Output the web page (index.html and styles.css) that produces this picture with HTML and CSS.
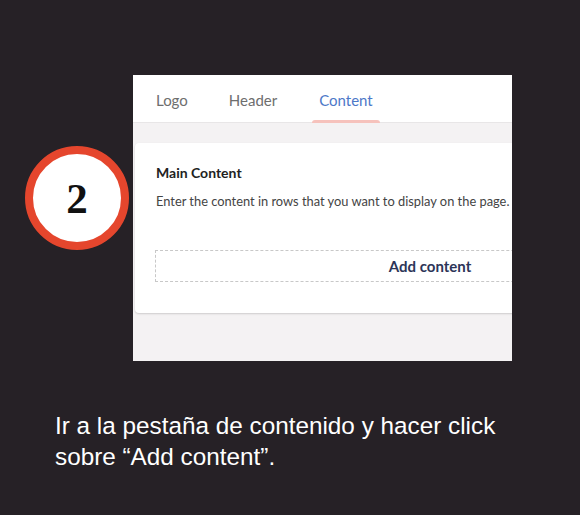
FILE: index.html
```html
<!DOCTYPE html>
<html>
<head>
<meta charset="utf-8">
<link rel="stylesheet" href="styles.css">
</head>
<body>
<main class="slide">
  <div class="stage">
    <div class="step-badge"><span class="step-num">2</span></div>
    <section class="shot">
      <nav class="tabs">
        <span class="tab">Logo</span>
        <span class="tab">Header</span>
        <span class="tab tab-active">Content</span>
      </nav>
      <div class="shot-body">
        <div class="card">
          <h2 class="card-title">Main Content</h2>
          <p class="card-desc">Enter the content in rows that you want to display on the page.</p>
          <div class="add-box">Add content</div>
        </div>
      </div>
    </section>
  </div>
  <p class="caption">Ir a la pestaña de contenido y hacer click sobre “Add content”.</p>
</main>
</body>
</html>
```

FILE: styles.css
```css
html, body {
  margin: 0;
  padding: 0;
}
body {
  background: #262126;
  width: 580px;
  height: 515px;
  overflow: hidden;
}
.slide {
  width: 580px;
  height: 515px;
  padding-top: 75px;
  box-sizing: border-box;
}
.stage {
  display: flex;
  align-items: flex-start;
}
.step-badge {
  margin-left: 25px;
  margin-top: 71px;
  width: 104px;
  height: 104px;
  box-sizing: border-box;
  border: 8px solid #e5462d;
  border-radius: 50%;
  background: #ffffff;
  display: flex;
  align-items: center;
  justify-content: center;
  flex-shrink: 0;
}
.step-num {
  font-family: "Liberation Serif", "DejaVu Serif", serif;
  font-weight: bold;
  font-size: 43px;
  color: #111111;
  line-height: 1;
}
.shot {
  margin-left: 4px;
  width: 379px;
  height: 286px;
  background: #f4f2f3;
  overflow: hidden;
  flex-shrink: 0;
  font-family: Lato, "Open Sans", sans-serif;
}
.tabs {
  height: 48px;
  background: #ffffff;
  border-bottom: 1px solid #e8e6e7;
  box-sizing: border-box;
  display: flex;
  align-items: stretch;
  padding-left: 23px;
}
.tab {
  font-size: 15px;
  color: #6e6e6e;
  display: flex;
  align-items: center;
  padding-top: 2px;
  position: relative;
}
.tab + .tab {
  margin-left: 41px;
}
.tab + .tab-active {
  margin-left: 42px;
  color: #4d78c8;
}
.tab-active::after {
  content: "";
  position: absolute;
  left: -7px;
  right: -7px;
  bottom: -1px;
  height: 3px;
  background: #f6c2bc;
  border-radius: 3px 3px 0 0;
}
.shot-body {
  padding-top: 20px;
  padding-left: 2px;
}
.card {
  width: 420px;
  background: #ffffff;
  border-radius: 4px;
  box-shadow: 0 1px 2px rgba(0, 0, 0, 0.16);
  padding: 21px 0 31px 21px;
  box-sizing: border-box;
}
.card-title {
  margin: 0;
  font-size: 14px;
  font-weight: bold;
  line-height: 17px;
  color: #222222;
}
.card-desc {
  margin: 12px 0 0 0;
  font-size: 12.85px;
  line-height: 16px;
  color: #444444;
  white-space: nowrap;
}
.add-box {
  margin-top: 41px;
  margin-left: -1px;
  width: 550px;
  height: 32px;
  box-sizing: border-box;
  border: 1px dashed #c8c8c8;
  display: flex;
  align-items: center;
  justify-content: center;
  font-size: 15px;
  font-weight: bold;
  color: #2c3558;
}
.caption {
  margin: 49px 0 0 55px;
  width: 460px;
  font-family: "Liberation Sans", Arial, sans-serif;
  font-size: 24.3px;
  line-height: 31px;
  color: #ffffff;
}
```
